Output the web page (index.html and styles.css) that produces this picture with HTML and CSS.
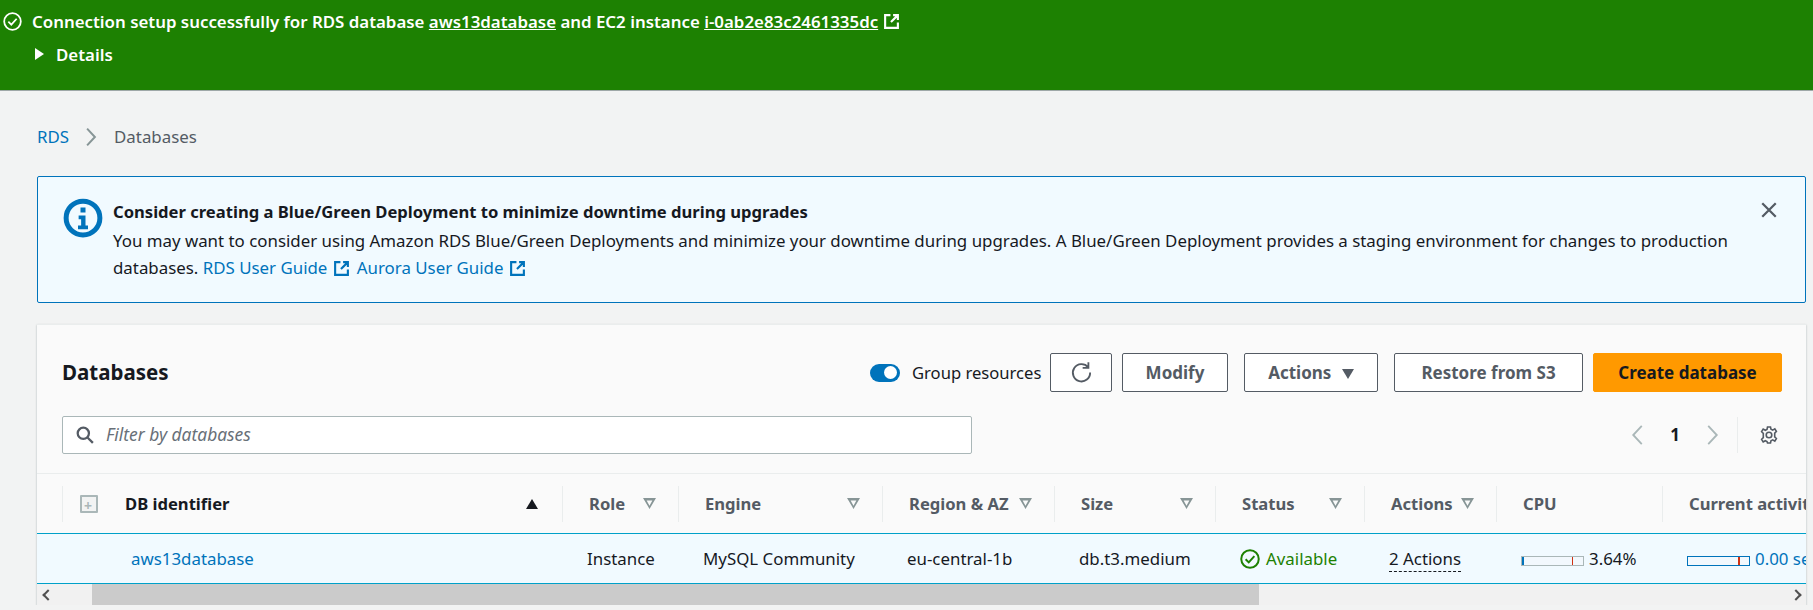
FILE: index.html
```html
<!DOCTYPE html>
<html>
  <head>
    <title>Databases</title>
    <link rel="stylesheet" href="styles.css">
  </head>
  <body>
    <div class="flash">
      <div class="flash-line">
        <svg class="flash-icon" viewBox="0 0 16 16"><circle cx="8" cy="8" r="7"/><path d="M4.500 8.200l2.500 2.500 4.500-5"/></svg>
        <span>Connection setup successfully for RDS database <a href="#">aws13database</a> and EC2 instance <a href="#">i-0ab2e83c2461335dc</a></span>
        <svg class="ext ext-white" viewBox="0 0 16 16"><path d="M7 2H2v12h12V9M9.500 2H14v4.500M14 2L7.500 8.500"/></svg>
      </div>
      <div class="flash-details"><span class="caret-right"></span>Details</div>
    </div>

    <main class="main">
      <nav class="crumbs">
        <a href="#">RDS</a>
        <svg class="crumb-sep" viewBox="0 0 10 18"><path d="M1.500 1.500l7 7.500-7 7.500"/></svg>
        <span>Databases</span>
      </nav>

      <section class="alert">
        <svg class="alert-icon" viewBox="0 0 32 32"><circle cx="16" cy="16" r="13.500"/><path class="fill" d="M14 7.500h4v4h-4zM12.500 14h5.500v8h2v3h-8v-3h2.500v-5h-2z"/></svg>
        <div class="alert-body">
          <div class="alert-title">Consider creating a Blue/Green Deployment to minimize downtime during upgrades</div>
          <div>You may want to consider using Amazon RDS Blue/Green Deployments and minimize your downtime during upgrades. A Blue/Green Deployment provides a staging environment for changes to production databases.
            <a href="#">RDS User Guide</a><svg class="ext" viewBox="0 0 16 16"><path d="M7 2H2v12h12V9M9.500 2H14v4.500M14 2L7.500 8.500"/></svg>
            <a href="#">Aurora User Guide</a><svg class="ext" viewBox="0 0 16 16"><path d="M7 2H2v12h12V9M9.500 2H14v4.500M14 2L7.500 8.500"/></svg>
          </div>
        </div>
        <svg class="alert-close" viewBox="0 0 16 16"><path d="M2 2l12 12M14 2L2 14"/></svg>
      </section>

      <section class="card">
        <div class="card-head">
          <h1>Databases</h1>
          <div class="toolbar">
            <span class="toggle"><span class="knob"></span></span>
            <span class="toggle-label">Group resources</span>
            <button class="btn btn-icon">
              <svg viewBox="0 0 20 20"><path d="M15.800 5.500A7.500 7.500 0 1 0 17.500 10M16 1v5h-5"/></svg>
            </button>
            <button class="btn btn-modify">Modify</button>
            <button class="btn btn-actions">Actions <span class="caret-down"></span></button>
            <button class="btn btn-restore">Restore from S3</button>
            <button class="btn btn-primary">Create database</button>
          </div>
        </div>

        <div class="filter-row">
          <div class="search">
            <svg viewBox="0 0 16 16"><circle cx="6.500" cy="6.500" r="5"/><path d="M10.200 10.200L15 15"/></svg>
            <span>Filter by databases</span>
          </div>
          <div class="pager">
            <svg class="chev" viewBox="0 0 10 18"><path d="M8.500 1.500L1.500 9l7 7.500"/></svg>
            <span class="page-num">1</span>
            <svg class="chev" viewBox="0 0 10 18"><path d="M1.500 1.500l7 7.500-7 7.500"/></svg>
            <span class="pager-div"></span>
            <svg class="gear" viewBox="0 0 20 20"><circle cx="10" cy="10" r="2.800"/><path d="M8.500 2h3l.5 2.300 1.700.8 2.100-1.200 1.600 2.600-1.700 1.700v3.600l1.700 1.700-1.600 2.600-2.100-1.200-1.700.8-.5 2.300h-3L8 16.500l-1.700-.8-2.100 1.200-1.600-2.600 1.700-1.700V8.400L2.600 6.700l1.600-2.600 2.100 1.200 1.700-.8z"/></svg>
          </div>
        </div>

        <table class="db-table">
          <colgroup>
            <col class="c-select"><col class="c-id"><col class="c-role"><col class="c-engine"><col class="c-region"><col class="c-size"><col class="c-status"><col class="c-actions"><col class="c-cpu"><col class="c-activity">
          </colgroup>
          <thead>
            <tr>
              <th><span class="cell-head select-head"><span class="expand-all"></span></span></th>
              <th><span class="cell-head sorted">DB identifier<span class="sort-up"></span></span></th>
              <th><span class="cell-head">Role<span class="sort-off"></span></span></th>
              <th><span class="cell-head">Engine<span class="sort-off"></span></span></th>
              <th><span class="cell-head">Region &amp; AZ<span class="sort-off"></span></span></th>
              <th><span class="cell-head">Size<span class="sort-off"></span></span></th>
              <th><span class="cell-head">Status<span class="sort-off"></span></span></th>
              <th><span class="cell-head">Actions<span class="sort-off"></span></span></th>
              <th><span class="cell-head">CPU</span></th>
              <th><span class="cell-head activity-head">Current activity</span></th>
            </tr>
          </thead>
          <tbody>
            <tr>
              <td></td>
              <td class="td-id"><a href="#">aws13database</a></td>
              <td>Instance</td>
              <td>MySQL Community</td>
              <td>eu-central-1b</td>
              <td>db.t3.medium</td>
              <td class="td-status">
                <svg viewBox="0 0 16 16"><circle cx="8" cy="8" r="7"/><path d="M4.500 8.200l2.500 2.500 4.500-5"/></svg>Available
              </td>
              <td><span class="dotted">2 Actions</span></td>
              <td><span class="meter"><span class="meter-fill"></span><span class="meter-mark"></span></span>3.64%</td>
              <td><span class="meter meter-blue"><span class="meter-mark"></span></span><a href="#">0.00 sessions</a></td>
            </tr>
          </tbody>
        </table>

        <div class="scrollbar">
          <span class="arrow arrow-left"></span>
          <span class="track"><span class="thumb"></span></span>
          <span class="arrow arrow-right"></span>
        </div>
      </section>
    </main>
  </body>
</html>
```

FILE: styles.css
```css
* {
  box-sizing: border-box;
}

body {
  margin: 0;
  background-color: #f2f3f3;
  color: #16191f;
  font-family: "Noto Sans", "Liberation Sans", sans-serif;
  font-size: 16.870px;
  line-height: 27px;
}

a {
  color: #0073bb;
  text-decoration: none;
}

svg {
  fill: none;
  stroke: currentColor;
  stroke-width: 1.5;
}

/* Green flash bar */
.flash {
  height: 91px;
  padding: 8px 0 0 3px;
  background-color: #1d8102;
  border-bottom: 1px solid #9fa8a8;
  color: #ffffff;
  font-weight: 600;
}

.flash a {
  color: #ffffff;
  text-decoration: underline;
}

.flash-line {
  display: flex;
  align-items: center;
  height: 26px;
}

.flash-icon {
  width: 19px;
  height: 19px;
  margin-right: 10px;
}

.ext {
  display: inline-block;
  width: 17px;
  height: 17px;
  margin: 0 2px 0 6px;
  vertical-align: -3px;
  color: #0073bb;
  stroke-width: 2;
}

.ext-white {
  margin-left: 5px;
  color: #ffffff;
}

.flash-details {
  display: flex;
  align-items: center;
  height: 26px;
  margin-top: 7px;
  padding-left: 32px;
}

.caret-right {
  width: 0;
  height: 0;
  margin-right: 12px;
  border-left: 9px solid #ffffff;
  border-top: 6.500px solid transparent;
  border-bottom: 6.500px solid transparent;
}

.main {
  padding: 0 7px 0 37px;
}

/* Breadcrumbs */
.crumbs {
  display: flex;
  align-items: center;
  height: 85px;
  padding-top: 6px;
  color: #545b64;
}

.crumb-sep {
  width: 12px;
  height: 20px;
  margin: 0 17px 0 16px;
  color: #879596;
  stroke-width: 1.8;
}

/* Info alert */
.alert {
  display: flex;
  height: 127px;
  padding: 21px 24px 0 25px;
  background-color: #f1faff;
  border: 1px solid #0073bb;
  border-radius: 2px;
}

.alert-icon {
  flex: none;
  width: 40px;
  height: 40px;
  margin-right: 10px;
  color: #0073bb;
  stroke-width: 4;
}

.alert-icon .fill {
  fill: #0073bb;
  stroke: none;
}

.alert-body {
  flex: 1;
  padding-right: 30px;
}

.alert-title {
  margin-bottom: 2px;
  font-size: 16.600px;
  font-weight: 700;
}

.alert-close {
  flex: none;
  width: 18px;
  height: 18px;
  margin: 3px 3px 0 0;
  color: #545b64;
  stroke-width: 2;
}

/* Card */
.card {
  margin-top: 21px;
  background-color: #fafafa;
  border-top: 1px solid #eaeded;
  box-shadow: 0 1px 2px rgba(0, 33, 43, 0.3);
  overflow: hidden;
}

.card-head {
  display: flex;
  align-items: center;
  justify-content: space-between;
  height: 67px;
  padding: 28px 24px 0 25px;
}

.card-head h1 {
  margin: 0;
  font-size: 20.500px;
  font-weight: 700;
}

.toolbar {
  display: flex;
  align-items: center;
}

.toggle {
  display: flex;
  justify-content: flex-end;
  align-items: center;
  width: 30px;
  height: 18px;
  margin-right: 12px;
  padding: 0 3px;
  background-color: #0073bb;
  border-radius: 9px;
}

.knob {
  width: 13px;
  height: 13px;
  background-color: #ffffff;
  border-radius: 50%;
}

.toggle-label {
  width: 129px;
  margin-right: 9px;
  font-size: 16.600px;
  white-space: nowrap;
}

.btn {
  display: block;
  height: 39px;
  padding: 0;
  margin-right: 10px;
  background-color: #ffffff;
  border: 1px solid #545b64;
  border-radius: 2px;
  color: #545b64;
  font-family: inherit;
  font-size: 17px;
  font-weight: 700;
}

.btn-icon {
  width: 62px;
}

.btn-icon svg {
  display: block;
  width: 23px;
  height: 23px;
  margin: 0 auto;
  stroke-width: 1.6;
}

.btn-modify {
  width: 106px;
  margin-right: 16px;
}

.btn-actions {
  width: 134px;
  margin-right: 16px;
}

.btn-restore {
  width: 189px;
}

.btn-primary {
  width: 189px;
  margin-right: 0;
  background-color: #ff9900;
  border-color: #ff9900;
  color: #16191f;
}

.caret-down {
  display: inline-block;
  width: 0;
  height: 0;
  margin-left: 6px;
  border-top: 10px solid #545b64;
  border-left: 6px solid transparent;
  border-right: 6px solid transparent;
}

/* Filter row */
.filter-row {
  display: flex;
  align-items: center;
  justify-content: space-between;
  height: 39px;
  margin-top: 23px;
  padding: 0 27px 0 25px;
}

.search {
  display: flex;
  align-items: center;
  width: 910px;
  height: 38px;
  padding-left: 13px;
  background-color: #ffffff;
  border: 1px solid #aab7b8;
  border-radius: 2px;
  color: #687078;
  font-size: 17.400px;
  font-style: italic;
}

.search svg {
  width: 18px;
  height: 18px;
  margin-right: 12px;
  color: #545b64;
  stroke-width: 2;
}

.pager {
  display: flex;
  align-items: center;
  color: #16191f;
}

.chev {
  width: 13px;
  height: 22px;
  color: #aab7b8;
  stroke-width: 1.5;
}

.page-num {
  width: 62px;
  text-align: center;
  font-weight: 700;
}

.pager-div {
  width: 1px;
  height: 36px;
  margin: 0 21px 0 18px;
  background-color: #eaeded;
}

.gear {
  width: 20px;
  height: 20px;
  color: #545b64;
  stroke-width: 1.6;
}

/* Table */
.db-table {
  width: 1860px;
  margin-top: 19px;
  table-layout: fixed;
  border-collapse: collapse;
  border-top: 1px solid #eaeded;
}

.c-select { width: 62px; }
.c-id { width: 463px; }
.c-role { width: 116px; }
.c-engine { width: 204px; }
.c-region { width: 172px; }
.c-size { width: 161px; }
.c-status { width: 149px; }
.c-actions { width: 132px; }
.c-cpu { width: 166px; }
.c-activity { width: 235px; }

.db-table th {
  height: 60px;
  padding: 0;
  text-align: left;
  color: #545b64;
  font-size: 16.600px;
  font-weight: 700;
  white-space: nowrap;
}

.cell-head {
  display: flex;
  align-items: center;
  justify-content: space-between;
  height: 36px;
  padding: 0 22px 0 26px;
  border-left: 1px solid #eaeded;
}

.cell-head.sorted {
  color: #16191f;
  border-left: 0;
}

.select-head {
  margin-left: 25px;
  padding: 0 0 0 17px;
}

.activity-head {
  display: block;
  line-height: 36px;
}

.expand-all {
  display: block;
  position: relative;
  width: 18px;
  height: 18px;
  background-color: #f2f3f3;
  border: 2px solid #aab7b8;
  border-radius: 1px;
}

.expand-all::before {
  content: "+";
  position: absolute;
  top: -5px;
  left: 2px;
  color: #aab7b8;
  font-size: 14px;
  font-weight: 700;
}

.sort-up {
  width: 0;
  height: 0;
  margin-right: 2px;
  border-bottom: 10px solid #16191f;
  border-left: 6.500px solid transparent;
  border-right: 6.500px solid transparent;
}

.sort-off {
  width: 13px;
  height: 11px;
  background-color: #879596;
  clip-path: polygon(0 0, 100% 0, 50% 100%, 38% 76%, 50% 70%, 72% 22%, 28% 22%, 50% 70%, 38% 76%);
}

.db-table td {
  height: 50px;
  padding: 0 0 0 25px;
  background-color: #f1faff;
  border-top: 1px solid #00a1c9;
  border-bottom: 1px solid #00a1c9;
  white-space: nowrap;
}

.db-table td.td-id {
  padding-left: 32px;
}

.td-status {
  color: #1d8102;
}

.td-status svg {
  width: 20px;
  height: 20px;
  margin-right: 6px;
  vertical-align: -4px;
  stroke-width: 1.6;
}

.dotted {
  display: inline-block;
  line-height: 24px;
  border-bottom: 1px dashed #16191f;
}

.meter {
  display: inline-block;
  position: relative;
  width: 63px;
  height: 10px;
  margin-right: 5px;
  vertical-align: -1px;
  background-color: #f2f8fd;
  border: 1px solid #aab7b8;
}

.meter-fill {
  display: block;
  width: 2px;
  height: 100%;
  background-color: #0073bb;
}

.meter-mark {
  position: absolute;
  top: 0;
  bottom: 0;
  left: 50px;
  width: 1px;
  background-color: #d13212;
}

.meter-blue {
  border-color: #0073bb;
}

.meter-blue .meter-mark {
  width: 2px;
}

/* Scrollbar */
.scrollbar {
  display: flex;
  height: 21px;
  background-color: #f1f1f1;
}

.arrow {
  flex: none;
  position: relative;
  width: 17px;
}

.arrow::before {
  content: "";
  position: absolute;
  top: 7px;
  width: 6px;
  height: 6px;
  border-left: 2px solid #505050;
  border-bottom: 2px solid #505050;
}

.arrow-left::before {
  left: 7px;
  transform: rotate(45deg);
}

.arrow-right::before {
  left: 3px;
  transform: rotate(225deg);
}

.track {
  flex: 1;
  padding-left: 38px;
}

.thumb {
  display: block;
  width: 1167px;
  height: 100%;
  background-color: #cbcbcb;
}
```
